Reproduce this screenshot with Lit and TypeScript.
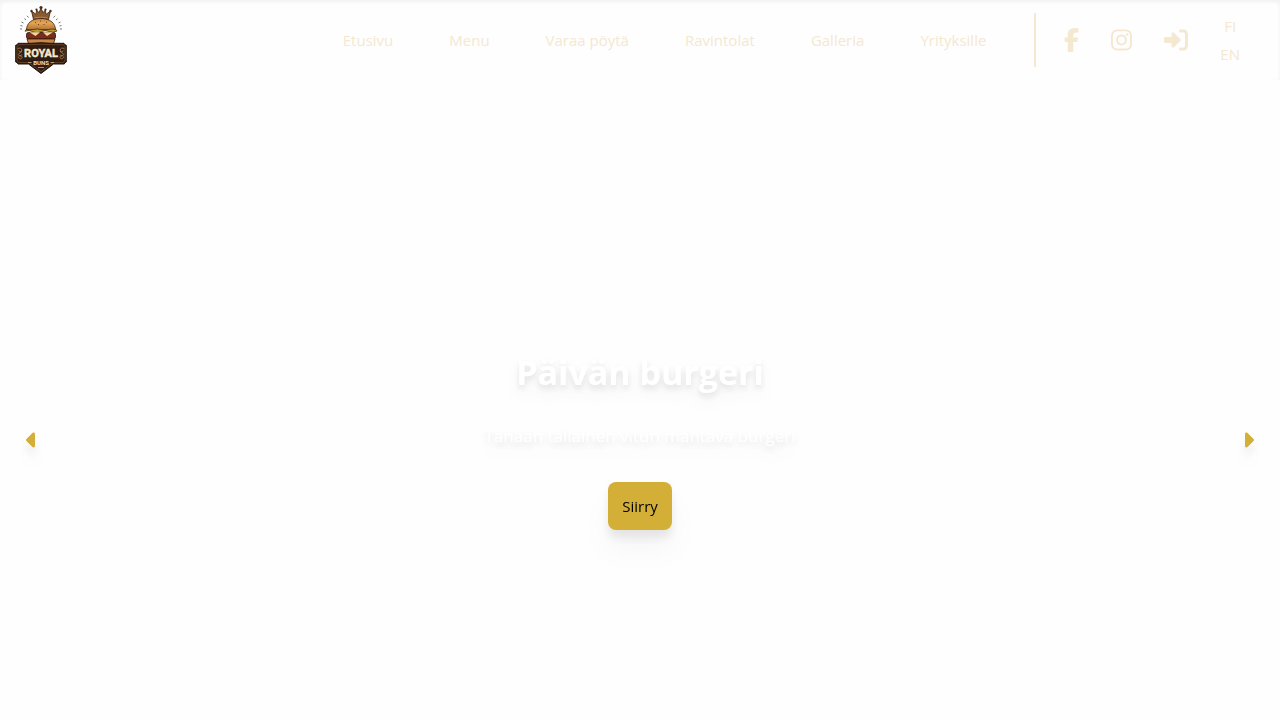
import { LitElement, html, css, svg } from "lit";
import { customElement } from "lit/decorators.js";

const NAV = ["Etusivu", "Menu", "Varaa pöytä", "Ravintolat", "Galleria", "Yrityksille"];

const FACEBOOK =
  "M80 299.3V512H196V299.3h86.5l18-97.8H196V166.9c0-51.7 20.3-71.5 72.7-71.5c16.3 0 29.4 .4 37 1.2V7.9C291.4 4 256.4 0 236.2 0C129.3 0 80 50.5 80 141.4v60.1H14v97.8H80z";
const INSTAGRAM =
  "M224.1 141c-63.6 0-114.9 51.3-114.9 114.9s51.3 114.9 114.9 114.9S339 319.5 339 255.9 287.7 141 224.1 141zm0 189.6c-41.1 0-74.7-33.5-74.7-74.7s33.5-74.7 74.7-74.7 74.7 33.5 74.7 74.7-33.6 74.7-74.7 74.7zm146.4-194.3c0 14.9-12 26.8-26.8 26.8-14.9 0-26.8-12-26.8-26.8s12-26.8 26.8-26.8 26.8 12 26.8 26.8zm76.1 27.2c-1.7-35.9-9.9-67.7-36.2-93.9-26.2-26.2-58-34.4-93.9-36.2-37-2.1-147.9-2.1-184.9 0-35.8 1.7-67.6 9.9-93.9 36.1s-34.4 58-36.2 93.9c-2.1 37-2.1 147.9 0 184.9 1.7 35.9 9.9 67.7 36.2 93.9s58 34.4 93.9 36.2c37 2.1 147.9 2.1 184.9 0 35.9-1.7 67.7-9.9 93.9-36.2 26.2-26.2 34.4-58 36.2-93.9 2.1-37 2.1-147.8 0-184.8zM398.8 388c-7.8 19.6-22.9 34.7-42.6 42.6-29.5 11.7-99.5 9-132.1 9s-102.7 2.6-132.1-9c-19.6-7.8-34.7-22.9-42.6-42.6-11.7-29.5-9-99.5-9-132.1s-2.6-102.7 9-132.1c7.8-19.6 22.9-34.7 42.6-42.6 29.5-11.7 99.5-9 132.1-9s102.7-2.6 132.1 9c19.6 7.8 34.7 22.9 42.6 42.6 11.7 29.5 9 99.5 9 132.1s2.7 102.7-9 132.1z";
const LOGIN =
  "M217.9 105.9L340.7 228.7c7.2 7.2 11.3 17.1 11.3 27.3s-4.1 20.1-11.3 27.3L217.9 406.1c-6.4 6.4-15 9.9-24 9.9c-18.7 0-33.9-15.2-33.9-33.9l0-62.1L32 320c-17.7 0-32-14.3-32-32l0-64c0-17.7 14.3-32 32-32l128 0 0-62.1c0-18.7 15.2-33.9 33.9-33.9c9 0 17.6 3.6 24 9.9zM352 416l64 0c17.7 0 32-14.3 32-32l0-256c0-17.7-14.3-32-32-32l-64 0c-17.7 0-32-14.3-32-32s14.3-32 32-32l64 0c53 0 96 43 96 96l0 256c0 53-43 96-96 96l-64 0c-17.7 0-32-14.3-32-32s14.3-32 32-32z";
const CARET_LEFT =
  "M9.4 278.6c-12.5-12.5-12.5-32.8 0-45.3l128-128c9.2-9.2 22.9-11.9 34.9-6.9s19.8 16.6 19.8 29.6l0 256c0 12.9-7.8 24.6-19.8 29.6s-25.7 2.2-34.9-6.9l-128-128z";
const CARET_RIGHT =
  "M246.6 278.6c12.5-12.5 12.5-32.8 0-45.3l-128-128c-9.2-9.2-22.9-11.9-34.9-6.9s-19.8 16.6-19.8 29.6l0 256c0 12.9 7.8 24.6 19.8 29.6s25.7 2.2 34.9-6.9l128-128z";

const icon = (path: string, width: number) =>
  html`<svg class="icon" viewBox="0 0 ${width} 512" aria-hidden="true"><path d=${path}></path></svg>`;

const scroll = svg`
  <path d="M17.600 48.600c2-1.200 4.600-.2 4.200 1.700s-3.200 1.600-3 .2M21.600 51c.6 1.800-3.200 1.600-3.200 3.400s3 1.600 3.400 0M18.400 56.600c-.2 2.600 3.400 3 3.600 .8s-2.200-1.400-2-.4"
    fill="none" stroke="#b07e48" stroke-width=".9"></path>`;

@customElement("brand-logo")
export class BrandLogo extends LitElement {
  static styles = css`
    :host { display: block; }
    .logo { display: block; width: 80px; height: 80px; }
    .royal { font: 700 11px Roboto, sans-serif; }
    .buns { font: 700 6px Roboto, sans-serif; }
  `;

  render() {
    return html`
      <svg class="logo" viewBox="0 0 80 80" role="img" aria-label="Royal Buns">
        <defs>
          <linearGradient id="bun" x1="0" y1="0" x2="0" y2="1">
            <stop offset="0" stop-color="#c98743"></stop>
            <stop offset=".4" stop-color="#e3a555"></stop>
            <stop offset="1" stop-color="#b56e30"></stop>
          </linearGradient>
        </defs>
        <path
          d="M26 20l-1.600-1.400M28.500 17.500l-1.500-1.700M23.500 23l-2-1M22.500 26l-2-.5M22 29l-2-.1M56 20l1.600-1.400M53.500 17.500l1.500-1.700M58.500 23l2-1M59.500 26l2-.5M60 29l2-.1"
          stroke="#666" stroke-width=".9"></path>
        <path d="M33.500 19.500l-2-8.500 4.500 3.400.6-4.600 2.400 3L41 8l2 4.800 2.400-3 .6 4.600 4.500-3.400-2 8.500q-7.500-1.800-15 0z"
          fill="#8d5a2e" stroke="#382113" stroke-width=".8"></path>
        <path d="M34.500 17.800q6.500-1.400 13 0" stroke="#c48d50" stroke-width=".8" fill="none"></path>
        <g fill="#4a2c18">
          <circle cx="31.500" cy="11" r="1.200"></circle><circle cx="36.500" cy="9.600" r="1.100"></circle>
          <circle cx="41" cy="7.500" r="1.600"></circle><circle cx="45.500" cy="9.600" r="1.100"></circle>
          <circle cx="50.500" cy="11" r="1.200"></circle>
        </g>
        <path d="M26.500 30c0-6.500 5-11.500 14.500-11.500S55.500 23.500 55.500 30z" fill="url(#bun)" stroke="#3b2010" stroke-width=".8"></path>
        <path d="M35 22.500l1 .4M40 21h1M46 22.500l1-.4M38 24.500h1M43.500 24.500h1"
          stroke="#5b3519" stroke-width=".9"></path>
        <rect x="26.500" y="32.500" width="29" height="6.500" rx="2" fill="#7a2d1b" stroke="#291109" stroke-width=".8"></rect>
        <path d="M26 29.500q3.700 1 7.500 0t7.500 0 7.500 0 7.500 0l1 1.500q-4 2.400-8 .5t-8 .3-8 0-8-.6z" fill="#b59a35" stroke="#33270d" stroke-width=".7"></path>
        <path d="M29.500 32.300h10.500l-4.500 3.700zM43 32.300h10l-6 3.700z" fill="#f4d696"></path>
        <path d="M27 39h28l-2 6H29z" fill="#c98746" stroke="#331b0f" stroke-width=".8"></path>
        <path d="M18 43.300h13q10-1.200 20 0h13q0 1.700 2.300 1.900V62q-1.800 .3-2 2H53.500L41 73.500 28.500 64H18q-.2-1.700-2.300-2V45.200q2.300-.2 2.300-1.900z"
          fill="#2f1c14" stroke="#21120c" stroke-width="1"></path>
        <path d="M18.600 44.700h12.500q10-1.200 20 0h12.300q.3 1.400 1.600 1.700v14.400q-1.300 .4-1.600 1.800H53L41 71.700 29 62.600H18.600q-.3-1.400-1.600-1.800V46.400q1.300-.3 1.600-1.700z"
          fill="none" stroke="#885b34" stroke-width=".6"></path>
        ${scroll}
        <g transform="matrix(-1 0 0 1 82 0)">${scroll}</g>
        <text class="royal" x="41" y="57" text-anchor="middle" fill="#f9e8cc" stroke="#f9e8cc" stroke-width=".4">ROYAL</text>
        <path d="M28 62.500h3.500M50.500 62.500h3.500M38 67.500h6" stroke="#d3b48c" stroke-width=".8"></path>
        <text class="buns" x="41" y="65" text-anchor="middle" fill="#f0dcc0">BUNS</text>
      </svg>
    `;
  }
}

@customElement("app-root")
export class AppRoot extends LitElement {
  static styles = css`
    :host {
      display: flex;
      flex-direction: column;
      height: 100vh;
      overflow: hidden;
      background: #fefefe;
      font-family: "Segoe UI", "Open Sans", "Noto Sans", sans-serif;
      font-size: 15px;
      line-height: 24px;
    }
    .header {
      flex: none;
      display: flex;
      align-items: center;
      justify-content: space-between;
      height: 80px;
      padding-right: 40px;
      box-shadow: inset 0 2px 4px rgb(0 0 0 / 0.06);
      color: #f5e8d0;
    }
    .right, .nav, .social { display: flex; align-items: center; }
    .right { gap: 48px; }
    .nav { gap: 56px; }
    .social {
      height: 54px;
      gap: 32px;
      padding-left: 28px;
      border-left: 2px solid #f5e8d0;
    }
    a { color: inherit; text-decoration: none; }
    .icon { display: block; height: 24px; fill: currentColor; }
    .lang {
      display: flex;
      flex-direction: column;
      align-items: center;
      gap: 4px;
    }
    button {
      padding: 0;
      border: 0;
      background: none;
      color: inherit;
      font: inherit;
      cursor: pointer;
    }
    .hero {
      flex: none;
      display: flex;
      align-items: center;
      justify-content: space-between;
      height: 100vh;
      padding: 0 26px;
      box-sizing: border-box;
    }
    .arrow, .cta {
      filter: drop-shadow(0 20px 13px rgb(0 0 0 / 0.03)) drop-shadow(0 8px 5px rgb(0 0 0 / 0.08));
    }
    .title, .text {
      filter: drop-shadow(0 10px 8px rgb(0 0 0 / 0.04)) drop-shadow(0 4px 3px rgb(0 0 0 / 0.1));
    }
    .arrow { color: #d4af37; }
    .slide {
      display: flex;
      flex-direction: column;
      align-items: center;
      color: #fff;
      text-align: center;
    }
    .title {
      margin: 0 0 28px;
      font-size: 34px;
      font-weight: 700;
      line-height: 44px;
    }
    .text {
      margin: 0 0 32px;
      font-size: 17px;
      line-height: 28px;
    }
    .cta {
      height: 48px;
      padding: 0 14px;
      border-radius: 8px;
      background: #d4af37;
      color: #000;
    }
  `;

  render() {
    return html`
      <header class="header">
        <a href="#"><brand-logo></brand-logo></a>
        <div class="right">
          <nav class="nav">${NAV.map((label) => html`<a href="#">${label}</a>`)}</nav>
          <div class="social">
            <a href="#" aria-label="Facebook">${icon(FACEBOOK, 320)}</a>
            <a href="#" aria-label="Instagram">${icon(INSTAGRAM, 448)}</a>
            <a href="#" aria-label="Kirjaudu">${icon(LOGIN, 512)}</a>
            <div class="lang">
              <button>FI</button>
              <button>EN</button>
            </div>
          </div>
        </div>
      </header>
      <main class="hero">
        <button class="arrow" aria-label="Edellinen">${icon(CARET_LEFT, 256)}</button>
        <section class="slide">
          <h1 class="title">Päivän burgeri</h1>
          <p class="text">Tänään tällainen vitun mahtava burgeri</p>
          <button class="cta">Siirry</button>
        </section>
        <button class="arrow" aria-label="Seuraava">${icon(CARET_RIGHT, 256)}</button>
      </main>
    `;
  }
}
